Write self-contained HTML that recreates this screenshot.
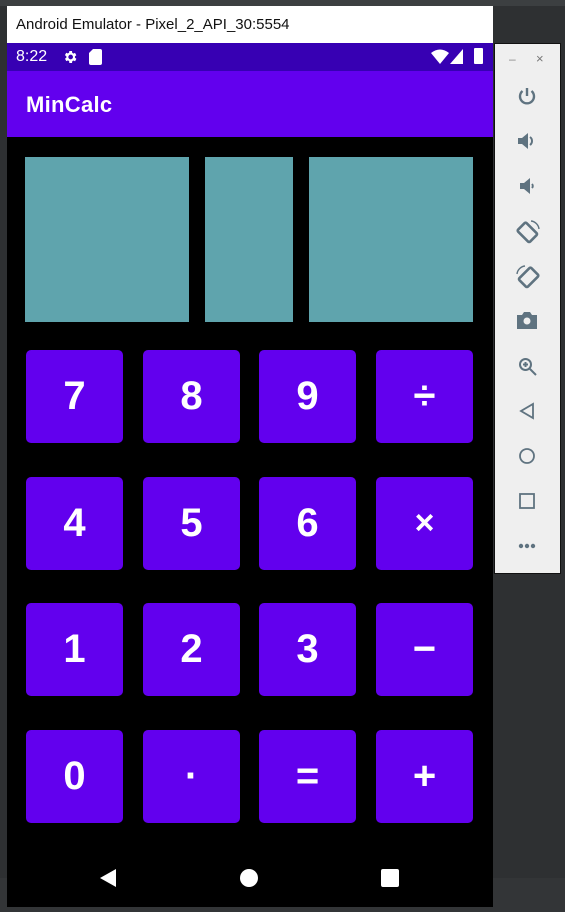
<!DOCTYPE html>
<html><head><meta charset="utf-8"><style>
*{margin:0;padding:0;box-sizing:border-box}
body{width:565px;height:912px;background:#2e3032;position:relative;overflow:hidden;font-family:"Liberation Sans",sans-serif}
.abs{position:absolute}
.title{left:7px;top:6px;width:486px;height:37px;background:#fff;font-size:15px;color:#111;padding:10px 0 0 9px}
.status{left:7px;top:43px;width:486px;height:28px;background:#3700b3;color:#fff}
.appbar{left:7px;top:71px;width:486px;height:66px;background:#6200ee;color:#fff;font-size:22px;font-weight:bold;padding:21px 0 0 19px;letter-spacing:0.3px}
.screen{left:7px;top:137px;width:486px;height:770px;background:#000}
.disp{background:#5fa4ad;top:157px;height:165px}
.btn{position:absolute;width:97px;height:93px;background:#6200ee;border-radius:5px;color:#fff;font-size:40px;font-weight:bold;text-align:center;line-height:93px}
.panel{left:494px;top:43px;width:67px;height:531px;background:#efefef;border:1px solid #111}
</style></head><body>
<div class="abs" style="left:0;top:0;width:565px;height:6px;background:#3c3f41"></div>
<div class="abs" style="left:0;top:878px;width:565px;height:34px;background:#333537"></div>
<div class="abs title">Android Emulator - Pixel_2_API_30:5554</div>
<div class="abs status">
 <span class="abs" style="left:9px;top:5px;font-size:16px">8:22</span>
 <svg class="abs" style="left:55px;top:6px" width="16" height="16" viewBox="0 0 24 24"><path fill="#fff" d="M19.4 13a7.5 7.5 0 000-2l2.1-1.6-2-3.5-2.5 1a7 7 0 00-1.7-1L15 3h-4l-.4 2.7a7 7 0 00-1.7 1l-2.5-1-2 3.5L6.6 11a7.5 7.5 0 000 2l-2.1 1.6 2 3.5 2.5-1a7 7 0 001.7 1L11 21h4l.4-2.7a7 7 0 001.7-1l2.5 1 2-3.5zM13 15.5a3.5 3.5 0 110-7 3.5 3.5 0 010 7z"/></svg>
 <svg class="abs" style="left:82px;top:6px" width="13" height="16" viewBox="0 0 13 16"><path fill="#fff" d="M4 0h7a2 2 0 012 2v12a2 2 0 01-2 2H2a2 2 0 01-2-2V4z"/></svg>
 <svg class="abs" style="left:424px;top:6px" width="18" height="15" viewBox="0 0 18 15"><path fill="#fff" d="M0 4Q9-3 18 4L9 15z"/></svg>
 <svg class="abs" style="left:443px;top:6px" width="13" height="15" viewBox="0 0 13 15"><path fill="#fff" d="M13 0v15H0z"/></svg>
 <div class="abs" style="left:467px;top:5px;width:9px;height:16px;background:#fff;border-radius:1px"></div>
</div>
<div class="abs appbar">MinCalc</div>
<div class="abs screen"></div>
<div class="abs disp" style="left:25px;width:164px"></div>
<div class="abs disp" style="left:205px;width:88px"></div>
<div class="abs disp" style="left:309px;width:164px"></div>
<div class="btn" style="left:26px;top:350px">7</div>
<div class="btn" style="left:143px;top:350px">8</div>
<div class="btn" style="left:259px;top:350px">9</div>
<div class="btn" style="left:376px;top:350px">÷</div>
<div class="btn" style="left:26px;top:477px">4</div>
<div class="btn" style="left:143px;top:477px">5</div>
<div class="btn" style="left:259px;top:477px">6</div>
<div class="btn" style="left:376px;top:477px;font-size:34px">×</div>
<div class="btn" style="left:26px;top:603px">1</div>
<div class="btn" style="left:143px;top:603px">2</div>
<div class="btn" style="left:259px;top:603px">3</div>
<div class="btn" style="left:376px;top:603px">−</div>
<div class="btn" style="left:26px;top:730px">0</div>
<div class="btn" style="left:143px;top:730px">·</div>
<div class="btn" style="left:259px;top:730px">=</div>
<div class="btn" style="left:376px;top:730px">+</div>
<svg class="abs" style="left:99px;top:868px" width="18" height="20" viewBox="0 0 18 20"><path fill="#fff" d="M17 1v18L1 10z"/></svg>
<div class="abs" style="left:240px;top:869px;width:18px;height:18px;border-radius:50%;background:#fff"></div>
<div class="abs" style="left:381px;top:869px;width:18px;height:18px;border-radius:2px;background:#fff"></div>
<div class="abs panel">
 <div class="abs" style="left:14px;top:8px;font-size:12px;color:#888">–</div>
 <div class="abs" style="left:41px;top:7px;font-size:13px;color:#777">×</div>
 <svg class="abs" style="left:22px;top:43px" width="20" height="20" viewBox="0 0 20 20"><path d="M10 1v8M5.5 4A7 7 0 1014.5 4" fill="none" stroke="#5f7380" stroke-width="2.4"/></svg>
 <svg class="abs" style="left:22px;top:87px" width="20" height="20" viewBox="0 0 20 20"><path fill="#5f7380" d="M1 7h4l6-5v16l-6-5H1z"/><path d="M13 6a5 5 0 010 8" fill="none" stroke="#5f7380" stroke-width="2"/></svg>
 <svg class="abs" style="left:23px;top:132px" width="20" height="20" viewBox="0 0 20 20"><path fill="#5f7380" d="M2 7h4l6-5v16l-6-5H2z"/><path d="M14 8a3 3 0 010 4" fill="none" stroke="#5f7380" stroke-width="2"/></svg>
 <svg class="abs" style="left:20px;top:175px" width="26" height="26" viewBox="0 0 26 26"><rect x="6" y="5" width="12" height="17" rx="1.5" transform="rotate(-45 12 13)" fill="none" stroke="#5f7380" stroke-width="2.6"/><path d="M16 2a9 9 0 018 8" fill="none" stroke="#5f7380" stroke-width="1.4"/></svg>
 <svg class="abs" style="left:20px;top:220px" width="26" height="26" viewBox="0 0 26 26"><rect x="8" y="5" width="12" height="17" rx="1.5" transform="rotate(45 14 13)" fill="none" stroke="#5f7380" stroke-width="2.6"/><path d="M2 10a9 9 0 018-8" fill="none" stroke="#5f7380" stroke-width="1.4"/></svg>
 <svg class="abs" style="left:22px;top:267px" width="20" height="18" viewBox="0 0 20 18"><path fill="#5f7380" d="M0 4h5l2-3h6l2 3h5v14H0z"/><circle cx="10" cy="10" r="3.5" fill="#efefef"/></svg>
 <svg class="abs" style="left:23px;top:313px" width="20" height="20" viewBox="0 0 20 20"><circle cx="7.5" cy="7.5" r="5.5" fill="none" stroke="#5f7380" stroke-width="2"/><path d="M12 12l6 6M7.5 5v5M5 7.5h5" stroke="#5f7380" stroke-width="2"/></svg>
 <svg class="abs" style="left:24px;top:358px" width="16" height="18" viewBox="0 0 16 18"><path d="M14 2v14L2 9z" fill="none" stroke="#5f7380" stroke-width="1.8"/></svg>
 <svg class="abs" style="left:23px;top:403px" width="18" height="18" viewBox="0 0 18 18"><circle cx="9" cy="9" r="7" fill="none" stroke="#5f7380" stroke-width="1.8"/></svg>
 <svg class="abs" style="left:24px;top:449px" width="16" height="16" viewBox="0 0 16 16"><rect x="1" y="1" width="14" height="14" fill="none" stroke="#5f7380" stroke-width="1.8"/></svg>
 <svg class="abs" style="left:23px;top:499px" width="18" height="6" viewBox="0 0 18 6"><circle cx="3" cy="3" r="2.2" fill="#5f7380"/><circle cx="9" cy="3" r="2.2" fill="#5f7380"/><circle cx="15" cy="3" r="2.2" fill="#5f7380"/></svg>
</div>
</body></html>
